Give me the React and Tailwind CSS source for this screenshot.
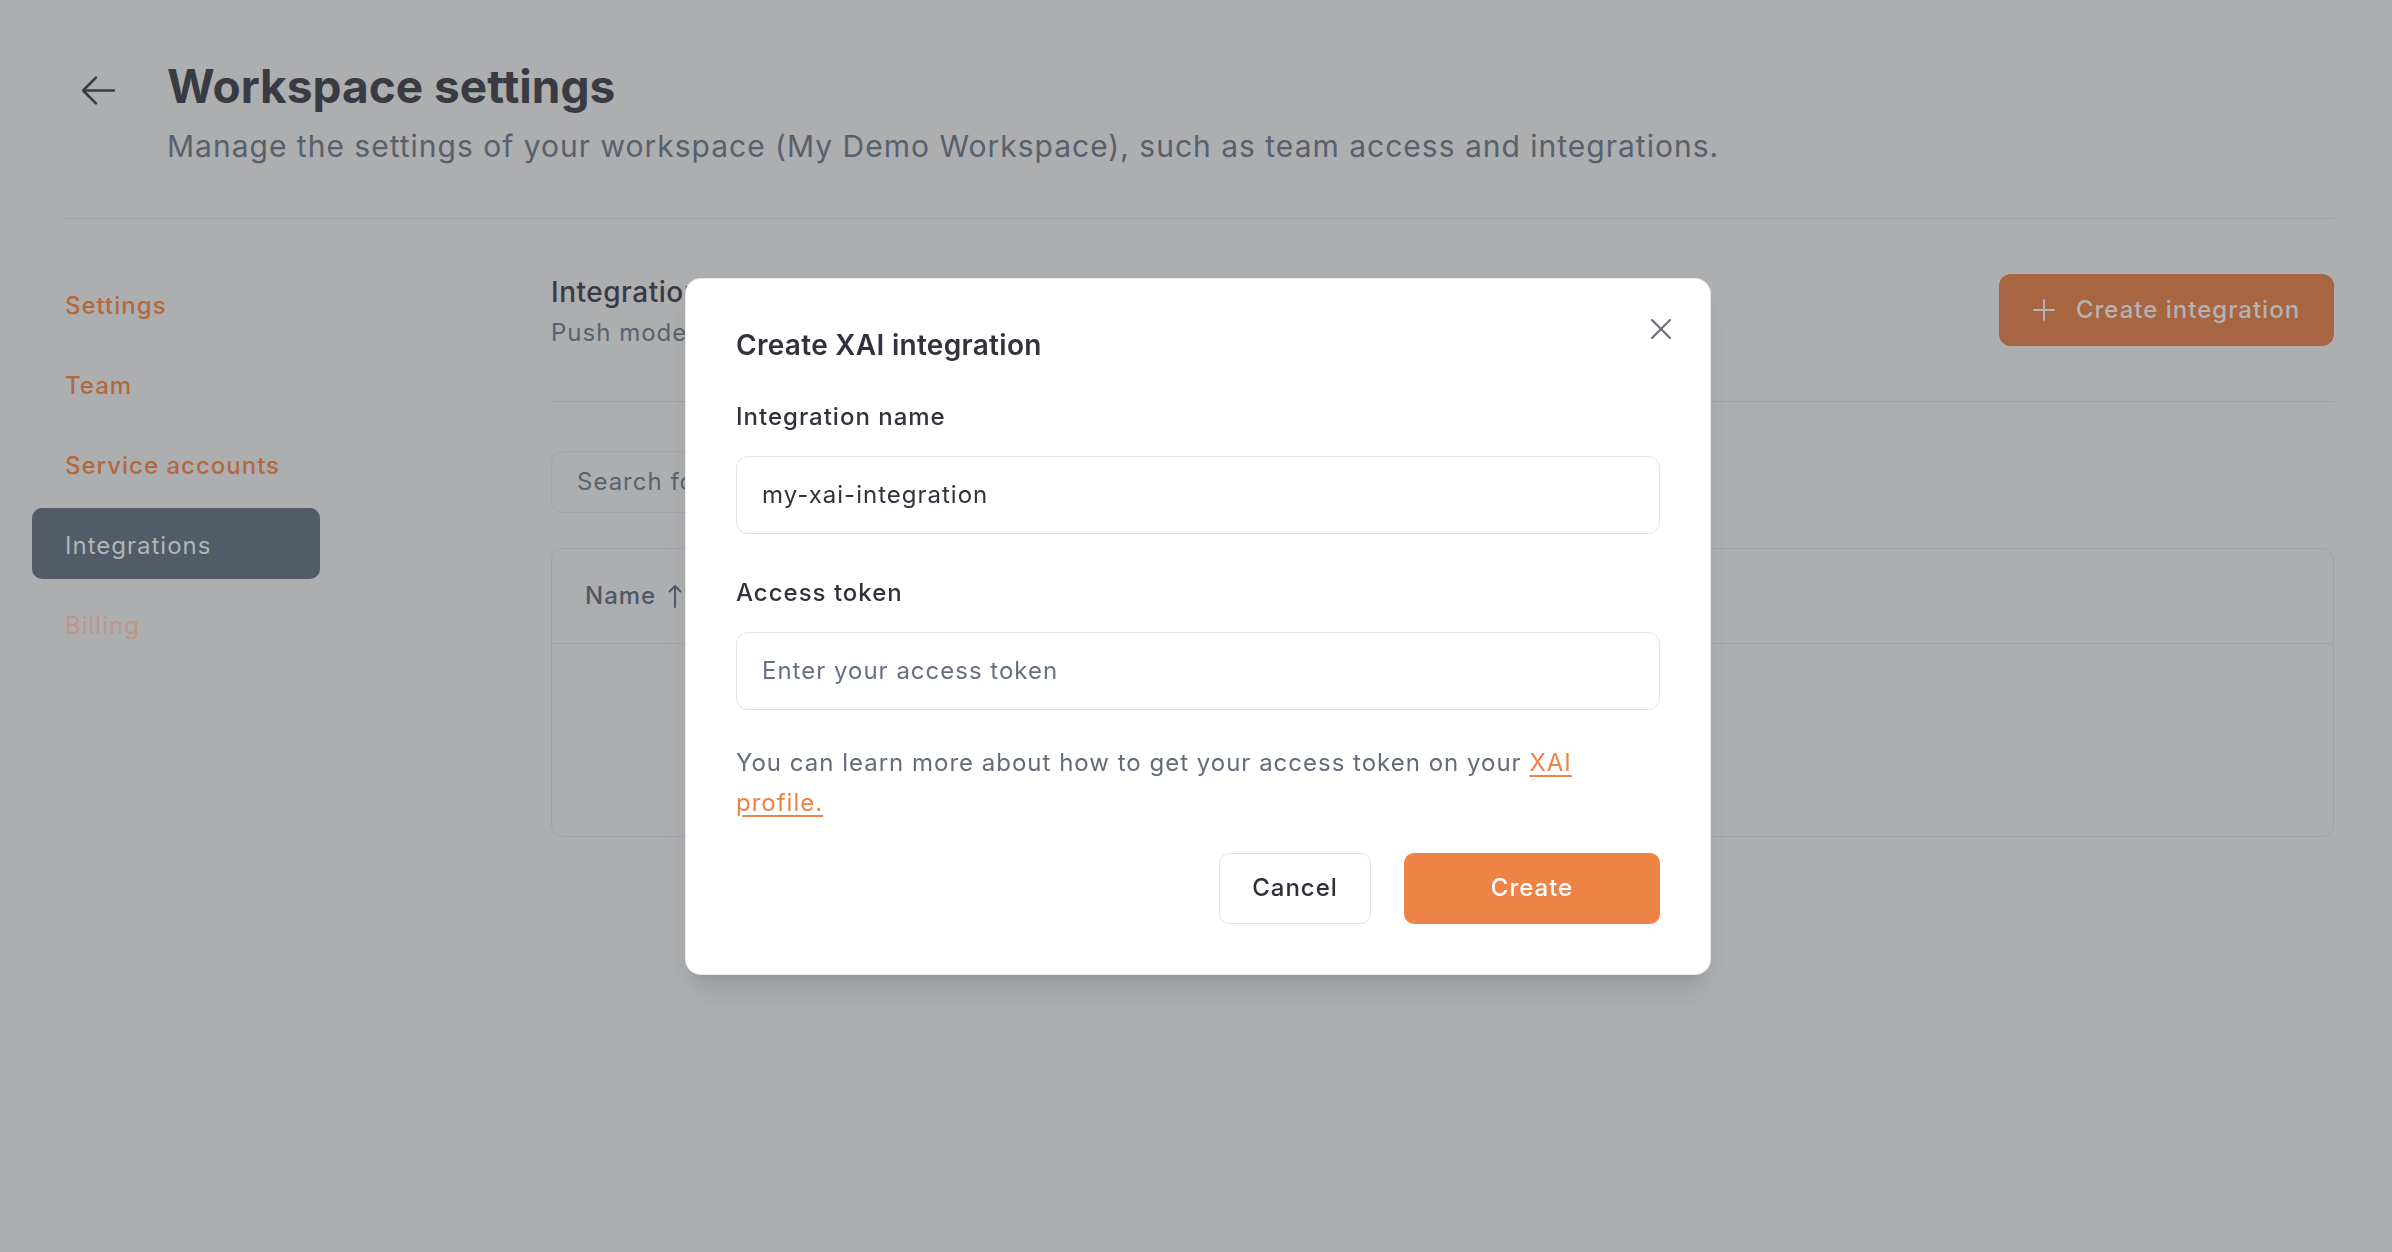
import { useState } from "react";

const navItems = [
  { label: "Settings", state: "link" },
  { label: "Team", state: "link" },
  { label: "Service accounts", state: "link" },
  { label: "Integrations", state: "active" },
  { label: "Billing", state: "disabled" },
];

function BackArrow() {
  return (
    <svg width="41" height="41" viewBox="0 0 24 24" fill="none" stroke="currentColor" strokeWidth="1.5" strokeLinecap="round" strokeLinejoin="round">
      <path d="M10.5 19.5 3 12m0 0 7.5-7.5M3 12h18" />
    </svg>
  );
}

function CreateXaiModal({ name, setName, token, setToken }) {
  return (
    <div className="fixed inset-0 flex items-center justify-center">
      <div className="relative ml-[4px] w-[1024px] rounded-[15px] bg-white p-[50px] shadow-xl ring-1 ring-[#e9ebf0]">
        <button className="absolute right-[31px] top-[32px] text-[#6b6e78]">
          <svg width="36" height="36" viewBox="0 0 24 24" fill="none" stroke="currentColor" strokeWidth="1.4" strokeLinecap="round">
            <path d="M18 6 6 18M6 6l12 12" />
          </svg>
        </button>

        <h3 className="text-[28px] leading-[32px] font-semibold tracking-[0.3px] text-[#30333b]">Create XAI integration</h3>

        <label className="mt-[38px] block text-[24px] leading-[36px] font-medium text-[#30333b]">Integration name</label>
        <input
          value={name}
          onChange={(e) => setName(e.target.value)}
          className="mt-[21px] block h-[78px] w-full rounded-[12px] border border-[#dfe3ea] px-[25px] text-[24px] tracking-[1px] text-[#30333b] outline-none"
        />

        <label className="mt-[41px] block text-[24px] leading-[36px] font-medium text-[#30333b]">Access token</label>
        <input
          value={token}
          onChange={(e) => setToken(e.target.value)}
          placeholder="Enter your access token"
          className="mt-[21px] block h-[78px] w-full rounded-[12px] border border-[#dfe3ea] px-[25px] text-[24px] tracking-[1px] text-[#30333b] outline-none placeholder:text-[#667085]"
        />

        <p className="mt-[33px] text-[24px] leading-[40px] text-[#646b79]">
          You can learn more about how to get your access token on your{" "}
          <a href="#" className="text-[#ee8347] underline underline-offset-4">XAI profile.</a>
        </p>

        <div className="mt-[30px] flex justify-end gap-[33px]">
          <button className="h-[71px] w-[152px] rounded-[10px] border border-[#dfe3ea] bg-white text-[24px] font-medium tracking-[1px] text-[#2d2f36]">Cancel</button>
          <button className="h-[71px] w-[256px] rounded-[10px] bg-[#ee8347] text-[24px] font-medium tracking-[1px] text-white">Create</button>
        </div>
      </div>
    </div>
  );
}

export default function App() {
  const [name, setName] = useState("my-xai-integration");
  const [token, setToken] = useState("");

  return (
    <div className="relative min-h-screen bg-[#adaeb0] font-['Inter',sans-serif] tracking-[1px]">
      <div className="pl-[64px] pr-[58px]">
        {/* Page header */}
        <header className="flex items-start border-b border-[#a0a1a6] pt-[59px] pb-[51px]">
          <button className="ml-[14px] mt-[11px] text-[#3a3b42]">
            <BackArrow />
          </button>
          <div className="ml-[48px]">
            <h1 className="text-[46px] leading-[55px] font-bold tracking-normal text-[#3a3b42]">Workspace settings</h1>
            <p className="mt-[11px] text-[30px] leading-[42px] text-[#59606b]">
              Manage the settings of your workspace (My Demo Workspace), such as team access and integrations.
            </p>
          </div>
        </header>

        <div className="flex">
          {/* Sidebar */}
          <nav className="-ml-[32px] flex w-[519px] shrink-0 flex-col gap-[9px] pt-[49px]">
            {navItems.map((item) => (
              <a
                key={item.label}
                href="#"
                className={
                  item.state === "active"
                    ? "flex h-[71px] w-[288px] items-center rounded-[10px] bg-[#525b68] px-[33px] pt-[4px] text-[24px] text-[#b1b4b9]"
                    : item.state === "disabled"
                    ? "flex h-[71px] w-[288px] items-center rounded-[10px] px-[33px] pt-[4px] text-[24px] text-[#bd9785]"
                    : "flex h-[71px] w-[288px] items-center rounded-[10px] px-[33px] pt-[4px] text-[24px] font-medium text-[#b4683f]"
                }
              >
                {item.label}
              </a>
            ))}
          </nav>

          {/* Main */}
          <main className="flex-1 pt-[52px]">
            <div className="flex items-start justify-between border-b border-[#a0a1a6] pb-[50px]">
              <div>
                <h2 className="text-[28px] leading-[42px] font-medium tracking-[0.5px] text-[#393b42]">Integrations</h2>
                <p className="mt-[2px] text-[24px] leading-[36px] text-[#59626e]">Push models and evaluations to external providers.</p>
              </div>
              <button className="mt-[3px] flex h-[72px] w-[335px] items-center justify-center gap-[21px] rounded-[12px] bg-[#a86541] text-[24px] font-medium text-[#b2b3b5]">
                <svg width="22" height="22" viewBox="0 0 22 22" fill="none" stroke="currentColor" strokeWidth="2" strokeLinecap="round">
                  <path d="M11 1v20M1 11h20" />
                </svg>
                Create integration
              </button>
            </div>

            <div className="mt-[49px] flex h-[62px] w-[620px] items-center rounded-[12px] border border-[#a3a5a9] px-[25px] text-[24px] text-[#5a6270]">
              Search for an integration
            </div>

            <div className="mt-[35px] rounded-[12px] border border-[#a2a3a8]">
              <div className="flex h-[95px] items-center gap-[12px] border-b border-[#a2a3a8] px-[33px] text-[24px] font-medium text-[#4f5866]">
                Name
                <svg width="14" height="26" viewBox="0 0 14 26" fill="none" stroke="currentColor" strokeWidth="2" strokeLinecap="round" strokeLinejoin="round">
                  <path d="M7 24V3M1.5 8.5 7 3l5.5 5.5" />
                </svg>
              </div>
              <div className="flex h-[192px] items-center justify-center text-[24px] text-[#5a6270]">No integrations yet</div>
            </div>
          </main>
        </div>
      </div>

      <CreateXaiModal name={name} setName={setName} token={token} setToken={setToken} />
    </div>
  );
}
